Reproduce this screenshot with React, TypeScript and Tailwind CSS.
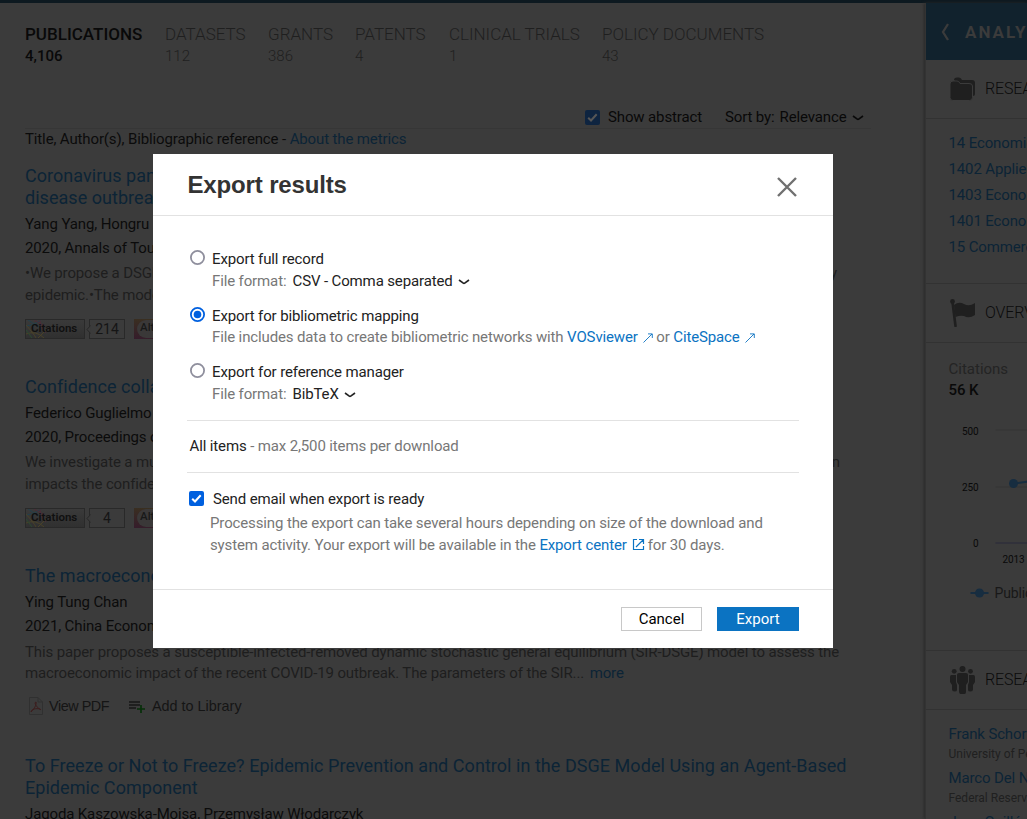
import React from "react";

const Logo = () => (
  <svg className="block shrink-0" width="20" height="18" viewBox="0 0 20 18" fill="none" strokeWidth="1">
    <path d="M0 6Q8 6 15 0M2 0L14 8" stroke="#23404c" />
    <path d="M8 0L19 6M14 0Q14 8 20 13" stroke="#4d2c38" />
    <path d="M0 5Q8 14 10 18M0 14Q10 10 18 18M20 10L12 18" stroke="#4a4228" />
    <path d="M0 10L6 18" stroke="#2b4a31" />
  </svg>
);

function Badges({ count }: { count: string }) {
  return (
    <div className="flex h-5 items-center tracking-normal">
      <div className="relative flex h-5 w-[60px] items-center overflow-hidden border border-[#292929] bg-gradient-to-b from-[#3a3a3a] to-[#303030]">
        <Logo />
        <span className="absolute left-[5px] top-[3px] text-[11.5px] font-semibold leading-none text-[#101010]">Citations</span>
      </div>
      <div className="relative ml-1 h-5 w-9 border border-[#292929] text-center text-sm leading-[19px] text-[#151515]">
        {count}
        <svg className="absolute -left-[4px] top-[5px]" width="5" height="9" viewBox="0 0 5 9">
          <path d="M4.5 .5L1 4.5L4.5 8.5" fill="#3b3b3b" stroke="#292929" />
        </svg>
      </div>
      <div className="relative ml-[9px] h-5 w-[19px] overflow-hidden">
        <svg className="block" width="60" height="20" viewBox="0 0 60 20">
          <defs>
            <linearGradient id="altmetricBadge" x1="0" y1="1" x2="0.3" y2="0">
              <stop offset="0" stopColor="#351c2b" />
              <stop offset="1" stopColor="#3a3020" />
            </linearGradient>
          </defs>
          <rect width="60" height="20" fill="url(#altmetricBadge)" />
          <rect x="3" y="1" width="70" height="18" rx="9" fill="#3a3838" />
        </svg>
        <span className="absolute left-[6px] top-[3px] text-[11.5px] font-medium leading-none text-[#181818]">Alt</span>
      </div>
    </div>
  );
}

const Chevron = () => (
  <svg className="ml-[5px] inline-block" width="12" height="8" viewBox="0 0 12 8">
    <path d="M1 2L5.3 5.2Q6 5.7 6.7 5.2L11 2" fill="none" stroke="currentColor" strokeWidth="1.6" />
  </svg>
);

const Check = ({ box, tick }: { box: string; tick: string }) => (
  <svg className="block shrink-0" width="15" height="15" viewBox="0 0 15 15">
    <rect width="15" height="15" rx="2" fill={box} />
    <path d="M3.2 7.7L6 10.5L11.7 4.3" fill="none" stroke={tick} strokeWidth="2" />
  </svg>
);

const Arrow = () => (
  <svg className="ml-[5px] mr-[3.5px] inline-block align-[-1px]" width="10" height="10" viewBox="0 0 10 10" fill="none" stroke="#0b73c2">
    <path d="M.5 9.5L9 1M5 .9H9.3V5" strokeWidth=".9" />
  </svg>
);

const Radio = ({ on = false }: { on?: boolean }) => (
  <svg className="block shrink-0" width="15" height="15" viewBox="0 0 15 15">
    <circle cx="7.5" cy="7.5" r="6.6" fill="#fff" stroke={on ? "#0060df" : "#8f8f9d"} strokeWidth="1.8" />
    {on && <circle cx="7.5" cy="7.5" r="3.8" fill="#0060df" />}
  </svg>
);

const tabs = [
  ["DATASETS", "112", "ml-[23px] w-[80px]"],
  ["GRANTS", "386", "ml-[23px] w-[65px]"],
  ["PATENTS", "4", "ml-[22px] w-[71px]"],
  ["CLINICAL TRIALS", "1", "ml-[23px] w-[131px]"],
  ["POLICY DOCUMENTS", "43", "ml-[22px] w-[170px]"],
];

function Results() {
  return (
    <main className="h-full w-[925px] shrink-0 overflow-hidden pl-[25px]">
      <nav className="flex h-[104px] whitespace-nowrap pt-[20px] tracking-normal">
        <div className="w-[117px] text-[17px] font-medium leading-[22px] text-[#090909]">
          PUBLICATIONS<div className="text-[15px]">4,106</div>
        </div>
        {tabs.map(([a, b, c]) => (
          <div key={a} className={`text-[17px] font-light leading-[22px] text-[#1f1f1f] ${c}`}>
            {a}<div className="text-[15px]">{b}</div>
          </div>
        ))}
      </nav>
      <div className="flex h-[22px] w-[846px] items-center border-b border-[#363636] pl-[560px] text-[15px] text-[#090909]">
        <div className="pb-px"><Check box="#0e2440" tick="#565656" /></div>
        <span className="ml-[8px]">Show abstract</span>
        <span className="ml-[23px] whitespace-nowrap">Sort by:</span>
        <span className="ml-[5px]">Relevance</span>
        <Chevron />
      </div>
      <p className="mt-[-1px] h-[37px] leading-[22px] text-[#0b0b0b]">
        Title, Author(s), Bibliographic reference - <span className="text-[#0c2436]">About the metrics</span>
      </p>

      <article className="h-[211px]">
        <h2 className="text-lg leading-[22px] tracking-[0.04px] text-[#0c2436]">Coronavirus pandemic<br />disease outbreak</h2>
        <p className="mt-[3px] leading-6 text-[#0b0b0b]">Yang Yang, Hongru Zhang</p>
        <p className="leading-6 text-[#0b0b0b]">2020, Annals of Tourism</p>
        <p className="mt-[2px] flex w-[812px] justify-between whitespace-nowrap leading-[22px] text-[#1e1e1e]"><span>•We propose a DSGE model</span><span>economy</span></p>
        <p className="leading-[22px] text-[#1e1e1e]">epidemic.•The model</p>
        <div className="mt-[13px]"><Badges count="214" /></div>
      </article>

      <article className="h-[189px]">
        <h2 className="text-lg leading-[22px] tracking-[0.04px] text-[#0c2436]">Confidence collapse</h2>
        <p className="mt-[3px] leading-6 text-[#0b0b0b]">Federico Guglielmo Morelli</p>
        <p className="leading-6 text-[#0b0b0b]">2020, Proceedings of the</p>
        <p className="mt-[2px] flex w-[815px] justify-between leading-[22px] text-[#1e1e1e]"><span>We investigate a multi-household</span><span>on</span></p>
        <p className="leading-[22px] text-[#1e1e1e]">impacts the confidence</p>
        <div className="mt-[13px]"><Badges count="4" /></div>
      </article>

      <article className="h-[190px]">
        <h2 className="text-lg leading-[22px] tracking-[0.04px] text-[#0c2436]">The macroeconomic</h2>
        <p className="mt-[3px] leading-6 text-[#0b0b0b]">Ying Tung Chan</p>
        <p className="leading-6 text-[#0b0b0b]">2021, China Economic</p>
        <p className="mt-1 w-[840px] whitespace-nowrap leading-[21px] text-[#1e1e1e]">This paper proposes a susceptible-infected-removed dynamic stochastic general equilibrium (SIR-DSGE) model to assess the<br />macroeconomic impact of the recent COVID-19 outbreak. The parameters of the SIR... <span className="ml-[2px] text-[#0c2436]">more</span></p>
        <div className="mt-[12px] flex h-[22px] items-center font-['Liberation_Sans'] text-[14.4px] tracking-normal text-[#151515]">
          <svg className="mb-[2px] ml-1 shrink-0" width="14" height="18" viewBox="0 0 14 18" fill="none">
            <path d="M.5 .5H9L13.5 5V17.5H.5ZM9 .5V5H13.5" stroke="#303030" />
            <path d="M2 15C2 12 7 11 11 12C14 14 7 11 6 6C8 2 8 10 2 15Z" stroke="#3d1d1d" />
          </svg>
          <span className="ml-[6px] w-[61px] whitespace-nowrap tracking-[-0.45px]">View PDF</span>
          <svg className="ml-[19px] shrink-0" width="16" height="14" viewBox="0 0 16 14"><path d="M0 2H11M0 5H11M0 8H7" stroke="#171717" strokeWidth="1.5" /><path d="M12 5V13M8 9H16" stroke="#062f09" strokeWidth="1.7" /></svg>
          <span className="ml-[7px]">Add to Library</span>
        </div>
      </article>

      <article>
        <h2 className="whitespace-nowrap text-lg leading-[22px] tracking-[0.045px] text-[#0c2436]">To Freeze or Not to Freeze? Epidemic Prevention and Control in the DSGE Model Using an Agent-Based<br />Epidemic Component</h2>
        <p className="mt-[3px] leading-6 text-[#0b0b0b]">Jagoda Kaszowska-Mojsa, Przemysław Włodarczyk</p>
      </article>
    </main>
  );
}

function Sidebar() {
  return (
    <aside className="h-full w-[102px] shrink-0 overflow-hidden whitespace-nowrap border-l border-[#333333] shadow-[-1px_0_3px_#292929]">
      <header className="flex h-[57px] items-center bg-[#11222d] pl-[15px] text-[17px] font-bold tracking-[2px] text-[#3b3b3b]">
        <svg className="shrink-0" width="9" height="18" viewBox="0 0 9 18"><path d="M7 1L2 9L7 17" fill="none" stroke="#3b3b3b" strokeWidth="2.3" /></svg>
        <span className="ml-[15px] mt-[2px]">ANALYTICAL VIEWS</span>
      </header>
      <section className="flex h-[59px] items-center border-b border-[#323232] pl-[24px] text-base font-light text-[#0b0b0b]">
        <svg className="shrink-0" width="26" height="24" viewBox="0 0 26 24">
          <path d="M4 3Q4 .5 7 .5H9Q11 .5 12 3H22Q25 3 25 6V17Q25 19 23 19" fill="#1f1f1f" />
          <path d="M0 7Q0 4 3 4H7Q9 4 10 6.5H19Q22.5 6.5 22.5 9V20.5Q22.5 23.5 19.5 23.5H3Q0 23.5 0 20.5Z" fill="#1f1f1f" stroke="#3b3b3b" />
        </svg>
        <span className="ml-[9px]">RESEARCH CATEGORIES</span>
      </section>
      <section className="h-[164px] pl-[22.5px] pt-[11px] leading-[26px] text-[#0c2436]">
        <p>14 Economics</p><p>1402 Applied Economics</p><p>1403 Econometrics</p><p>1401 Economic Theory</p><p>15 Commerce</p>
      </section>
      <section className="flex h-[60px] items-center border-y border-[#323232] pl-[24px] text-base font-light text-[#0b0b0b]">
        <svg className="shrink-0" width="26" height="28" viewBox="0 0 26 28" fill="#1f1f1f"><circle cx="2.5" cy="2.5" r="2.4" /><path d="M2.5 3L5.5 27" stroke="#1f1f1f" strokeWidth="2.6" strokeLinecap="round" /><path d="M4 6Q9 2 14 5T25 4V16Q19 20 14 17Q10 16 5.5 18Z" /></svg>
        <span className="ml-[9px]">OVERVIEW</span>
      </section>
      <section className="h-[307px] pl-[22.5px] pt-[16px]">
        <p className="leading-[21px] tracking-normal text-[#242424]">Citations</p>
        <p className="font-medium leading-[21px] text-[#090909]">56 K</p>
        <svg className="mt-[15px] block h-[198px] w-[80px]" viewBox="-0.5 0 80 198">
          <path d="M46 14H79M46 71H79" stroke="#343434" />
          <path d="M46 127H79" stroke="#31313a" strokeWidth="2" />
          <path d="M64 67.5L79 65.5" stroke="#172d40" strokeWidth="2" />
          <circle cx="64" cy="67.5" r="4.5" fill="#172d40" />
          <g fill="#090909" fontSize="10" textAnchor="end"><text x="29" y="19">500</text><text x="29" y="75">250</text><text x="29" y="131">0</text></g>
          <text x="53" y="147" fill="#090909" fontSize="10">2013</text>
          <path d="M21 177H39" stroke="#172d40" strokeWidth="2" /><circle cx="30" cy="177" r="4.5" fill="#172d40" />
          <text x="45" y="182" fill="#181818" fontSize="14">Publications</text>
        </svg>
      </section>
      <section className="flex h-[60px] items-center border-y border-[#323232] pl-[23px] text-base font-light text-[#0b0b0b]">
        <svg className="shrink-0" width="27" height="28" viewBox="0 0 27 28" fill="#1f1f1f"><circle cx="13.5" cy="3" r="3" /><circle cx="5.2" cy="5.3" r="2.4" /><circle cx="21.5" cy="5.3" r="2.4" /><path d="M10 7H17Q19 7 19 9V16L17 19V26Q17 28 15.5 28H11.5Q10.5 28 10 26V19L8 16V9Q8 7 10 7ZM2.5 9H7V16L8 19V24Q8 25.5 5.5 25.5Q3 25.5 3 23V19L1 16V11Q1 9 2.5 9ZM20 9H24.5Q26 9 26 11V16L24 19V23Q24 25.5 21.5 25.5Q19 25.5 19 24V19L20 16Z" /></svg>
        <span className="ml-[9px]">RESEARCHERS</span>
      </section>
      <section className="pl-[22.5px] pt-[14px]">
        <p className="leading-[21px] text-[#0c2436]">Frank Schorfheide</p><p className="mb-[5px] text-xs leading-[18px] tracking-normal text-[#202020]">University of Pennsylvania</p>
        <p className="leading-[21px] text-[#0c2436]">Marco Del Negro</p><p className="mb-[5px] text-xs leading-[18px] tracking-normal text-[#202020]">Federal Reserve Bank</p>
        <p className="leading-[21px] text-[#0c2436]">Juan Guillén</p>
      </section>
    </aside>
  );
}

function Dialog() {
  return (
    <div role="dialog" className="absolute left-[153px] top-[154px] flex h-[494px] w-[680px] flex-col bg-white text-[15px] leading-[22px] text-[#222222]">
      <header className="flex h-[62px] items-center justify-between border-b border-[#e2e2e2] pl-[34.5px] pr-[36px]">
        <h1 className="font-['Liberation_Sans'] text-[24px] font-bold tracking-[-0.15px] text-[#333333]">Export results</h1>
        <svg className="mt-[4px]" width="20" height="20" viewBox="0 0 20 20"><path d="M1 1L19 19M19 1L1 19" stroke="#707070" strokeWidth="2.4" /></svg>
      </header>
      <div className="flex h-[374px] flex-col whitespace-nowrap border-b border-[#e2e2e2] px-[34px]">
        <div className="flex h-[89px] gap-[7px] pl-[3px] pt-[34px]"><Radio /><div className="-mt-[2px]">Export full record<p className="text-[#777]">File format: <span className="ml-[2.5px] text-[#222]">CSV - Comma separated<Chevron /></span></p></div></div>
        <div className="flex h-[56px] gap-[7px] pl-[3px] pt-[2px]"><Radio on /><div className="-mt-[2px]">Export for bibliometric mapping<p className="-mt-px text-[#777]">File includes data to create bibliometric networks with <span className="text-[#0b73c2]">VOSviewer<Arrow /></span>or <span className="text-[#0b73c2]">CiteSpace<Arrow /></span></p></div></div>
        <div className="flex h-[59px] gap-[7px] pl-[3px] pt-[2px]"><Radio /><div className="-mt-[2px]">Export for reference manager<p className="text-[#777]">File format: <span className="ml-[2.5px] text-[#222]">BibTeX<Chevron /></span></p></div></div>
        <div className="flex h-[53px] items-center border-y border-[#e2e2e2] pb-[2px] pl-[2.5px]">All items&nbsp;<span className="text-[#777]">- max 2,500 items per download</span></div>
        <div className="flex gap-[9px] pl-[2px] pt-[15px]"><div className="pt-[3px]"><Check box="#0060df" tick="white" /></div><span>Send email when export is ready</span></div>
        <p className="ml-[23px] mt-[2px] text-[#777]">Processing the export can take several hours depending on size of the download and<br />system activity. Your export will be available in the <span className="text-[#0b73c2]">Export center<svg className="ml-[5px] mr-[3px] inline-block align-[-1px]" width="13" height="13" viewBox="0 0 13 13" fill="none" stroke="#0b73c2"><path d="M5 1.5H1.5V11.5H11.5V8M7 1.5H11.5V6M4 9L11.5 1.5" strokeWidth="1.2" /></svg></span>for 30 days.</p>
      </div>
      <footer className="flex items-center justify-end gap-[15px] pr-[34px] pt-[17px]">
        <button className="h-6 w-[81px] border border-[#c8c8c8] tracking-normal text-black">Cancel</button>
        <button className="h-6 w-[82px] bg-[#0b73c2] tracking-normal text-white">Export</button>
      </footer>
    </div>
  );
}

export default function App() {
  return (
    <div className="relative h-[819px] w-[1027px] overflow-hidden bg-[#3b3b3b] font-[Roboto,sans-serif] text-[15px] tracking-[-0.13px]">
      <div className="h-[3px] bg-[#0d1920]" />
      <div className="flex h-[816px]"><Results /><Sidebar /></div>
      <Dialog />
    </div>
  );
}
